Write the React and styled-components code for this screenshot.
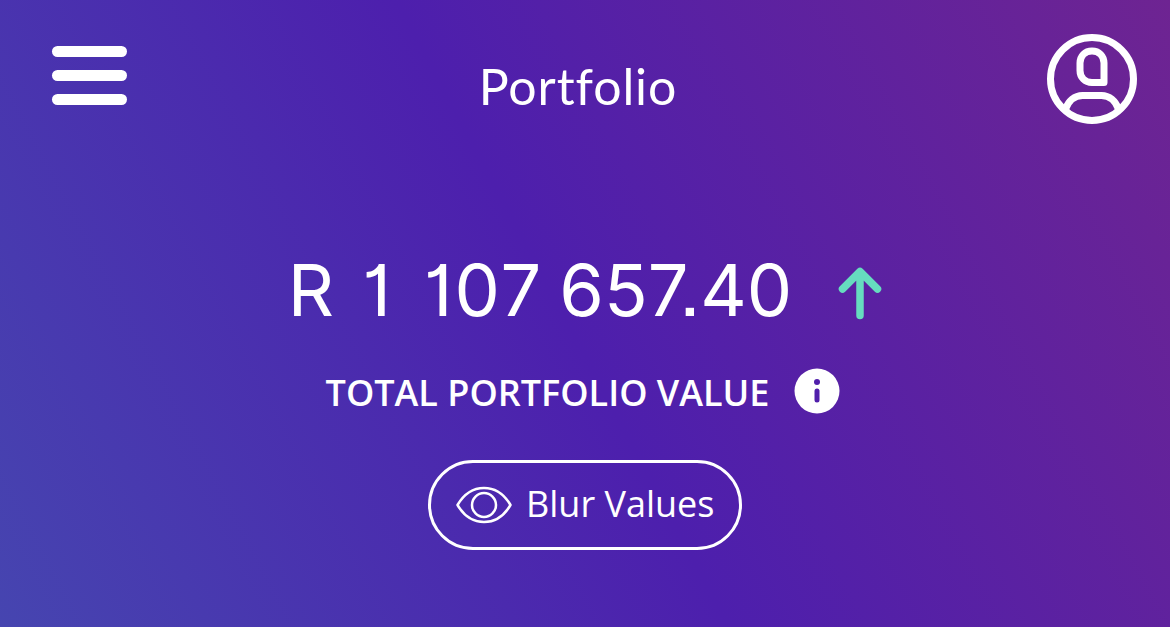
import React from 'react';
import styled, { createGlobalStyle } from 'styled-components';

const GlobalStyle = createGlobalStyle`
  * {
    box-sizing: border-box;
  }
  body {
    margin: 0;
    color: #fff;
    font-family: 'Open Sans', 'Noto Sans', sans-serif;
  }
`;

const Screen = styled.div`
  width: 100%;
  height: 100vh;
  min-height: 627px;
  overflow: hidden;
  background: linear-gradient(62deg, #4645b0 0%, #4d1fad 48.5%, #6e2492 100%);
`;

const TopBar = styled.header`
  display: grid;
  grid-template-columns: 90px 1fr 90px;
  align-items: start;
  height: 130px;
  padding: 34px 33px 0 52px;
`;

const MenuButton = styled.button`
  display: flex;
  flex-direction: column;
  justify-content: space-between;
  width: 75px;
  height: 59px;
  margin-top: 12px;
  padding: 0;
  border: 0;
  background: none;
`;

const MenuBar = styled.span`
  height: 11px;
  border-radius: 6px;
  background: #fff;
`;

const Title = styled.h1`
  margin: 21px 0 0;
  padding-right: 33px;
  font-family: Lato, sans-serif;
  font-size: 50px;
  font-weight: 400;
  line-height: 62px;
  letter-spacing: 0.9px;
  text-align: center;
`;

const ProfileButton = styled.button`
  width: 90px;
  height: 90px;
  padding: 0;
  border: 0;
  background: none;
`;

const Icon = styled.svg`
  display: block;
  flex: none;
  width: ${(props) => props.$width}px;
  height: ${(props) => props.$height}px;
  fill: none;
  stroke: ${(props) => props.$color || '#fff'};
  stroke-width: ${(props) => props.$stroke};
  stroke-linecap: round;
  stroke-linejoin: round;
`;

const Summary = styled.main`
  display: flex;
  flex-direction: column;
  align-items: center;
`;

const AmountRow = styled.div`
  display: flex;
  align-items: center;
  gap: 46px;
  height: 90px;
  margin-top: 118px;
`;

const Amount = styled.div`
  display: flex;
  padding-bottom: 6px;
  font-family: Inter, sans-serif;
  font-size: 72px;
  font-weight: 400;
  font-feature-settings: 'cv01', 'ss07';
  line-height: 86px;
`;

const Digits = styled.span`
  margin-right: ${(props) => props.$space || 0}px;
  letter-spacing: ${(props) => props.$tracking || 0}px;
`;

const LabelRow = styled.div`
  display: flex;
  align-items: center;
  gap: 25px;
  height: 50px;
  margin: 28px 4px 0 0;
`;

const Label = styled.span`
  padding-top: 4px;
  font-size: 36px;
  font-weight: 600;
  line-height: 50px;
  white-space: nowrap;
`;

const BlurButton = styled.button`
  display: flex;
  align-items: center;
  gap: 14px;
  width: 314px;
  height: 90px;
  margin-top: 44px;
  padding: 0 0 0 25px;
  border: 3px solid #fff;
  border-radius: 45px;
  background: none;
  color: #fff;
  font-family: inherit;
  font-size: 36px;
  line-height: 50px;
  white-space: nowrap;
`;

const ButtonText = styled.span`
  padding-bottom: 2px;
`;

export default function App() {
  return (
    <Screen>
      <GlobalStyle />
      <TopBar>
        <MenuButton aria-label="Menu">
          <MenuBar />
          <MenuBar />
          <MenuBar />
        </MenuButton>
        <Title>Portfolio</Title>
        <ProfileButton aria-label="Profile">
          <Icon viewBox="0 0 90 90" $width={90} $height={90} $stroke={7}>
            <circle cx="45" cy="45" r="41.5" />
            <path d="M45 17c7 0 12 5 12 12v19.500H45c-7 0-12-5-12-12V29c0-7 5-12 12-12z" />
            <path d="M18.500 75c3-8 9-13.500 17-13.500h19c8 0 14 5.500 17 13.500" />
          </Icon>
        </ProfileButton>
      </TopBar>
      <Summary>
        <AmountRow>
          <Amount>
            <Digits $space={28}>R</Digits>
            <Digits $space={33}>1</Digits>
            <Digits $space={16} $tracking={2}>107</Digits>
            <Digits>657.40</Digits>
          </Amount>
          <Icon viewBox="0 0 44 54" $width={44} $height={54} $stroke={7.5} $color="#66dcbf">
            <path d="M22 6v43.500M4.500 23 22 5.500 39.500 23" />
          </Icon>
        </AmountRow>
        <LabelRow>
          <Label>TOTAL PORTFOLIO VALUE</Label>
          <Icon viewBox="0 0 46 46" $width={46} $height={46} $stroke={5}>
            <circle cx="23" cy="23" r="22.500" fill="#fff" stroke="none" />
            <circle cx="23" cy="14" r="3" fill="#501fab" stroke="none" />
            <path d="M23 23v9" stroke="#501fab" />
          </Icon>
        </LabelRow>
        <BlurButton>
          <Icon viewBox="0 0 56 38" $width={56} $height={38} $stroke={2.5}>
            <path d="M1.500 19C8 8 17 2 28 2s20 6 26.500 17C48 30 39 36 28 36S8 30 1.500 19z" />
            <circle cx="28" cy="19" r="12" />
          </Icon>
          <ButtonText>Blur Values</ButtonText>
        </BlurButton>
      </Summary>
    </Screen>
  );
}
